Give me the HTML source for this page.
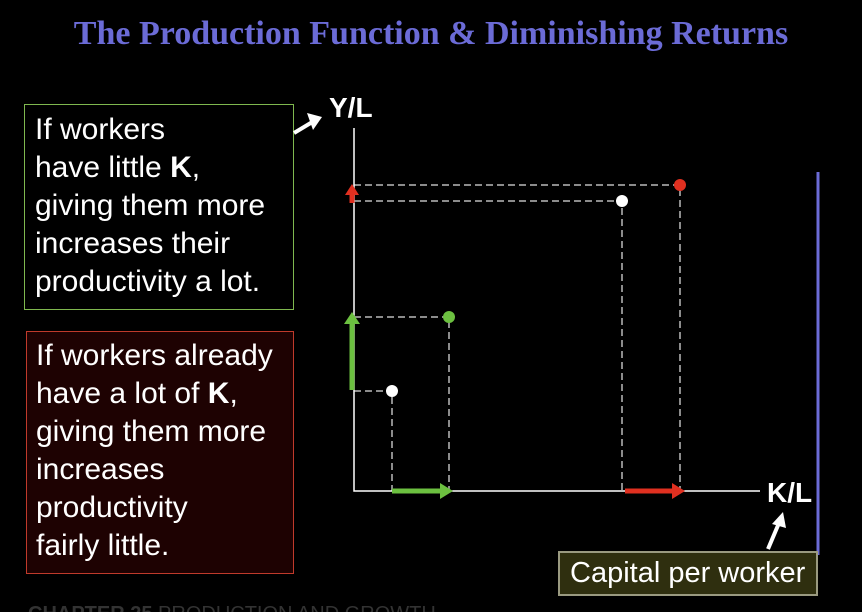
<!DOCTYPE html>
<html><head><style>
body{margin:0;width:862px;height:612px;background:#000;overflow:hidden;position:relative;font-family:"Liberation Sans",sans-serif}
.t{position:absolute;top:15px;left:0;width:862px;text-align:center;font-family:"Liberation Serif",serif;font-weight:bold;font-size:34px;color:#6b6bd6;white-space:nowrap}
.box{position:absolute;color:#fff;font-size:30px;line-height:38px;box-sizing:border-box;white-space:nowrap}
.g{left:24px;top:104px;width:270px;height:206px;border:1px solid #7fb84f;padding:6px 0 0 10px}
.r{left:26px;top:331px;width:268px;height:243px;border:1px solid #c03a2b;background:#1e0202;padding:5px 0 0 9px}
.c{left:558px;top:551px;width:260px;height:45px;border:2px solid #9a9a80;background:#2f2f0f;font-size:29px;line-height:40px;padding-left:10px}
svg{position:absolute;left:0;top:0}
</style></head><body>
<div class="t">The Production Function &amp; Diminishing Returns</div>
<div class="box g">If workers<br>have little <b>K</b>,<br>giving them more<br>increases their<br>productivity a lot.</div>
<div class="box r">If workers already<br>have a lot of <b>K</b>,<br>giving them more<br>increases<br>productivity<br>fairly little.</div>
<svg width="862" height="612">
<g stroke="#bbb" stroke-width="1.5" stroke-dasharray="7,4" fill="none">
<path d="M354 185H680V491"/><path d="M354 201H622V491"/><path d="M354 317H449V491"/><path d="M354 391H392V491"/>
</g>
<path d="M354 128V491H760" stroke="#fff" stroke-width="1.5" fill="none"/>
<path d="M818 172V555" stroke="#6b6bd6" stroke-width="3"/>
<circle cx="680" cy="185" r="6" fill="#e03020"/><circle cx="622" cy="201" r="6" fill="#fff"/>
<circle cx="449" cy="317" r="6" fill="#6cc040"/><circle cx="392" cy="391" r="6" fill="#fff"/>
<path d="M352 203V193" stroke="#e03020" stroke-width="5"/><path d="M345 195L352 184L359 195Z" fill="#e03020"/>
<path d="M352 390V322" stroke="#6cc040" stroke-width="5"/><path d="M344 324L352 312L360 324Z" fill="#6cc040"/>
<path d="M392 491H442" stroke="#6cc040" stroke-width="5"/><path d="M440 483L453 491L440 499Z" fill="#6cc040"/>
<path d="M625 491H674" stroke="#e03020" stroke-width="5"/><path d="M672 483L685 491L672 499Z" fill="#e03020"/>
<path d="M294 133L314 121" stroke="#fff" stroke-width="4"/><path d="M307 113L322 117L313 130Z" fill="#fff"/>
<path d="M768 549L779 523" stroke="#fff" stroke-width="4"/><path d="M772 524L783 512L786 528Z" fill="#fff"/>
<text x="329" y="117" fill="#fff" font-family="Liberation Sans" font-weight="bold" font-size="28">Y/L</text>
<text x="767" y="502" fill="#fff" font-family="Liberation Sans" font-weight="bold" font-size="28">K/L</text>
<text x="28" y="620" fill="#333" font-family="Liberation Sans" font-size="20"><tspan font-weight="bold">CHAPTER 25</tspan>   PRODUCTION AND GROWTH</text>
</svg>
<div class="box c">Capital per worker</div>
</body></html>
